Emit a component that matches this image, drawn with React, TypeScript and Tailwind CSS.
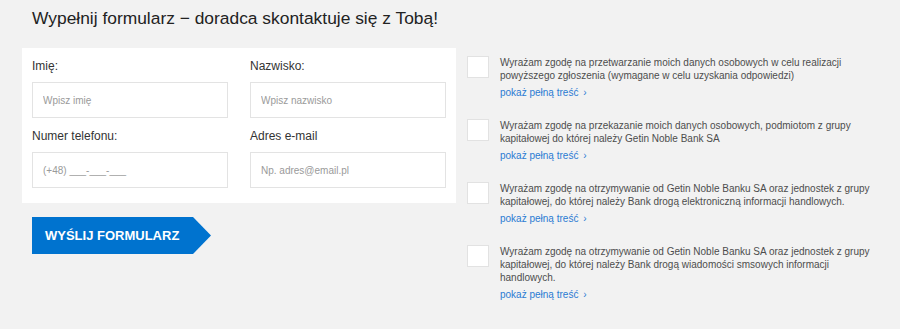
import { useState } from 'react';

const fields = [
  [
    { label: 'Imię:', placeholder: 'Wpisz imię' },
    { label: 'Nazwisko:', placeholder: 'Wpisz nazwisko' },
  ],
  [
    { label: 'Numer telefonu:', placeholder: '(+48) ___-___-___' },
    { label: 'Adres e-mail', placeholder: 'Np. adres@email.pl' },
  ],
];

const consents = [
  'Wyrażam zgodę na przetwarzanie moich danych osobowych w celu realizacji powyższego zgłoszenia (wymagane w celu uzyskania odpowiedzi)',
  'Wyrażam zgodę na przekazanie moich danych osobowych, podmiotom z grupy kapitałowej do której należy Getin Noble Bank SA',
  'Wyrażam zgodę na otrzymywanie od Getin Noble Banku SA oraz jednostek z grupy kapitałowej, do której należy Bank drogą elektroniczną informacji handlowych.',
  'Wyrażam zgodę na otrzymywanie od Getin Noble Banku SA oraz jednostek z grupy kapitałowej, do której należy Bank drogą wiadomości smsowych informacji handlowych.',
];

export default function App() {
  const [checked, setChecked] = useState<boolean[]>([false, false, false, false]);

  return (
    <div className="min-h-[329px] bg-[#f2f2f2] font-['Liberation_Sans',Arial,sans-serif] text-[#333]">
      <h1 className="pl-[32px] pt-[5px] text-[17.4px] leading-[26px] text-[#222]">
        Wypełnij formularz − doradca skontaktuje się z Tobą!
      </h1>

      <div className="mt-[17px] flex gap-[11px] pl-[22px]">
        <div className="w-[434px] shrink-0">
          <div className="bg-white px-[10px] pb-[15px] pt-[10px]">
            {fields.map((row, rowIndex) => (
              <div key={rowIndex} className={rowIndex > 0 ? 'mt-[10px] flex gap-[22px]' : 'flex gap-[22px]'}>
                {row.map((field) => (
                  <label key={field.label} className="block w-[196px]">
                    <span className="block text-[12px] leading-4 text-[#333]">{field.label}</span>
                    <input
                      className="mt-[8px] h-[36px] w-full border border-[#e3e3e3] bg-white px-[10px] text-[10px] text-[#333] outline-none placeholder:text-[#9a9a9a]"
                      placeholder={field.placeholder}
                      type="text"
                    />
                  </label>
                ))}
              </div>
            ))}
          </div>

          <button className="mt-[14px] ml-[10px] flex h-[37px] items-center" type="button">
            <span className="flex h-[37px] w-[161px] items-center bg-[#0073cf] pl-[13px] text-[13px] font-bold text-white">
              WYŚLIJ FORMULARZ
            </span>
            <svg className="h-[37px] w-[18px]" viewBox="0 0 18 37">
              <polygon points="0,0 18,18.5 0,37" fill="#0073cf" />
            </svg>
          </button>
        </div>

        <div className="w-[410px] shrink-0 pt-[8px]">
          {consents.map((text, index) => (
            <div key={index} className={index > 0 ? 'mt-[20px] flex gap-[11px]' : 'flex gap-[11px]'}>
              <button
                aria-pressed={checked[index]}
                className="h-[22px] w-[22px] shrink-0 border border-[#e2e2e2] bg-white"
                onClick={() => setChecked((current) => current.map((value, i) => (i === index ? !value : value)))}
                type="button"
              >
                {checked[index] ? <span className="text-[13px] text-[#0073cf]">✓</span> : null}
              </button>
              <div className="w-[372px] shrink-0">
                <p className="text-[10px] leading-[13px] text-[#4d4d4d]">{text}</p>
                <a className="mt-[4px] block text-[10px] leading-[13px] text-[#2a7bd3]" href="#">
                  pokaż pełną treść <span className="ml-[2px]">›</span>
                </a>
              </div>
            </div>
          ))}
        </div>
      </div>
    </div>
  );
}
